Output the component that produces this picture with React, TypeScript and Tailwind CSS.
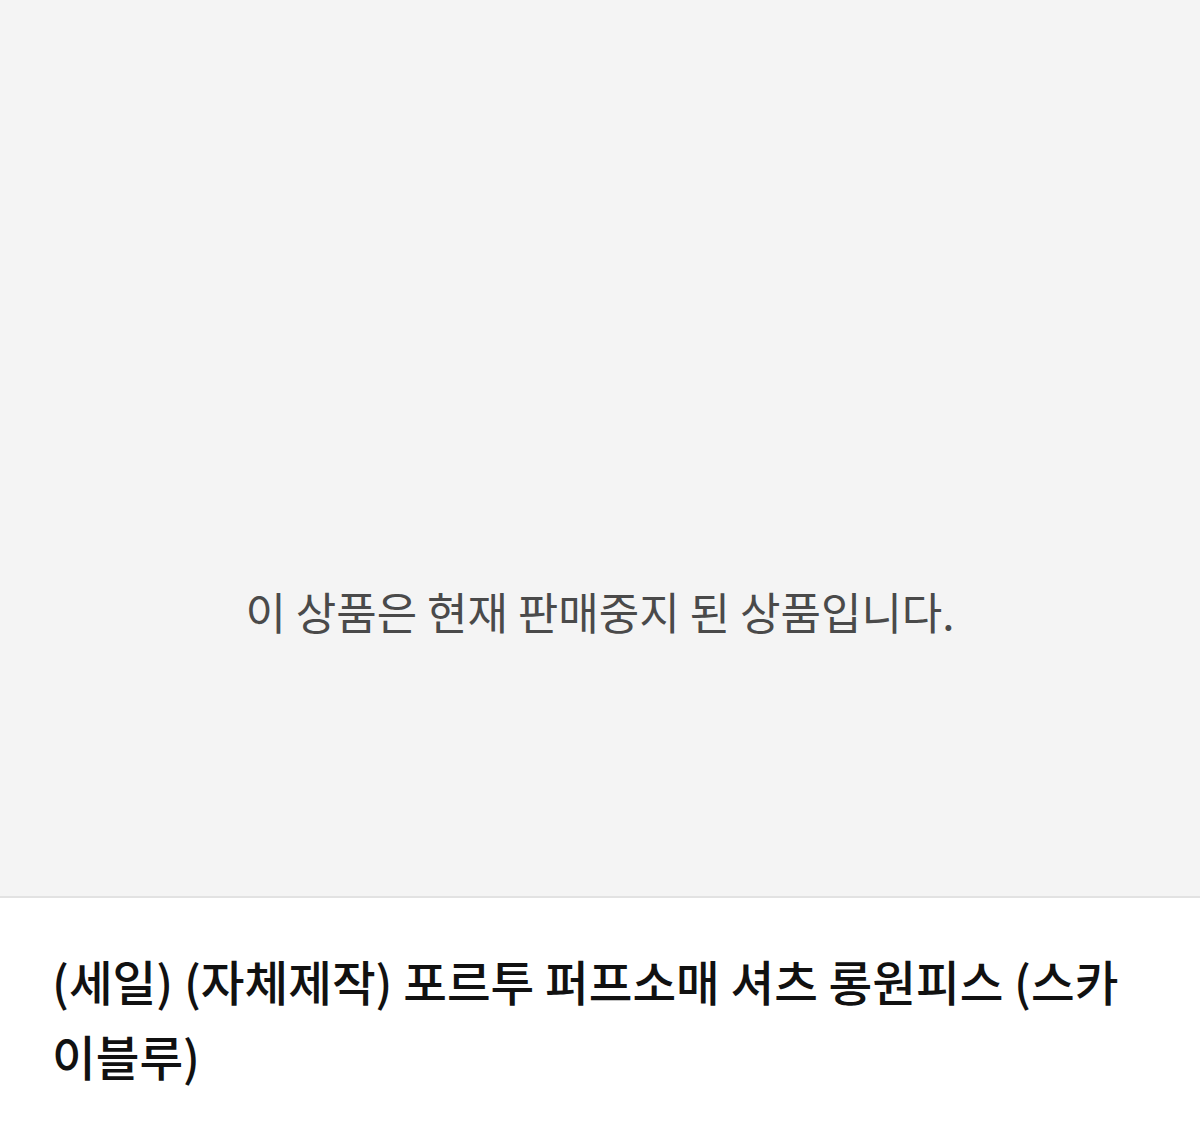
import React from 'react';

const font = { fontFamily: '"Noto Sans CJK KR", "Noto Sans", sans-serif' };

const App: React.FC = () => {
  return (
    <div className="w-[1200px] min-h-[1131px] bg-white" style={font}>
      <div className="h-[898px] bg-[#f4f4f4] border-b-2 border-[#e2e2e2] flex items-center justify-center">
        <p className="mt-[326px] text-[44px] text-[#4a4a4a] leading-none">이 상품은 현재 판매중지 된 상품입니다.</p>
      </div>
      <div className="px-[52px] pt-[45px]">
        <h1 className="text-[47.5px] font-medium text-[#111] leading-[75px]">
          (세일) (자체제작) 포르투 퍼프소매 셔츠 롱원피스 (스카이블루)
        </h1>
      </div>
    </div>
  );
};

export default App;
